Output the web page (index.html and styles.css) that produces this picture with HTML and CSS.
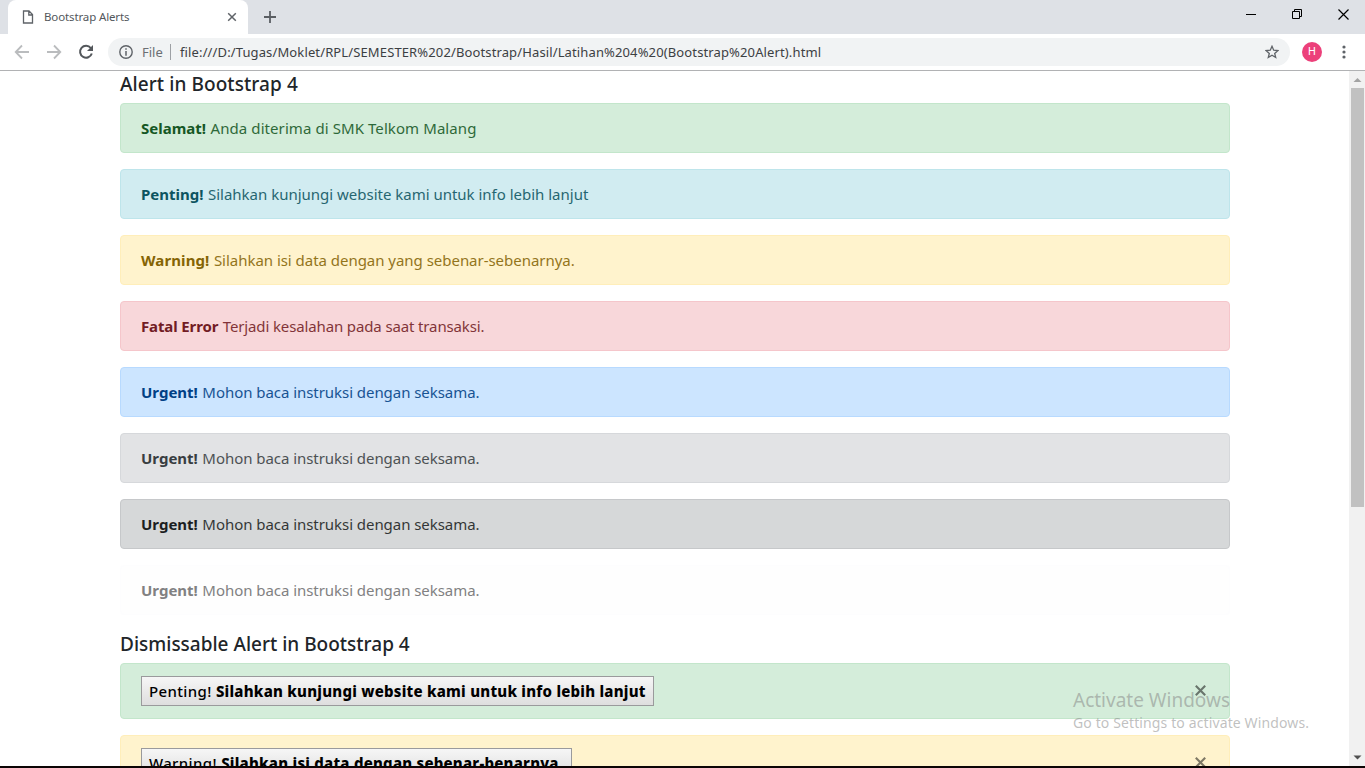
FILE: index.html
```html
<!DOCTYPE html>
<html lang="en">
<head>
<meta charset="utf-8">
<title>Bootstrap Alerts</title>
<link rel="stylesheet" href="styles.css">
</head>
<body>
<div class="window">
  <div class="tabstrip">
    <div class="tab">
      <svg class="doc" width="12" height="14" viewBox="0 0 12 14"><path d="M1.5 1H7l3.5 3.5V13h-9zM6.8 1v4h3.700" fill="none" stroke="#5f6368" stroke-width="1.3"/></svg>
      <span class="tab-title">Bootstrap Alerts</span>
      <svg class="tab-close" width="10" height="10" viewBox="0 0 10 10"><path d="M1.200 1.200l7.600 7.600M8.800 1.200L1.200 8.800" stroke="#5f6368" stroke-width="1.500"/></svg>
    </div>
    <svg class="plus" width="12" height="12" viewBox="0 0 12 12"><path d="M6 0v12M0 6h12" stroke="#5a5e63" stroke-width="1.8"/></svg>
    <div class="controls">
      <svg width="10" height="12" viewBox="0 0 10 12"><path d="M0 6.5h10" stroke="#000"/></svg>
      <svg width="10" height="10" viewBox="0 0 10 10"><path d="M.5 2.5h7v7h-7zM2.5 2.5v-2h7v7h-2" fill="none" stroke="#000"/></svg>
      <svg width="11" height="11" viewBox="0 0 11 11"><path d="M.5.5l10 10M10.5.5l-10 10" stroke="#000" stroke-width="1.2"/></svg>
    </div>
  </div>
  <div class="toolbar">
    <svg class="nav" width="16" height="16" viewBox="0 0 16 16"><path d="M15 8H2M8 1.500L1.700 8 8 14.500" fill="none" stroke="#babcbe" stroke-width="1.8"/></svg>
    <svg class="nav" width="16" height="16" viewBox="0 0 16 16"><path d="M1 8h13M8 1.500L14.300 8 8 14.500" fill="none" stroke="#babcbe" stroke-width="1.8"/></svg>
    <svg class="nav" width="16" height="16" viewBox="0 0 16 16"><path d="M12.800 4A6 6 0 1 0 13.800 9.500" fill="none" stroke="#53575b" stroke-width="2"/><path d="M15 1v6H9z" fill="#53575b"/></svg>
    <div class="omnibox">
      <svg class="info" width="14" height="14" viewBox="0 0 14 14"><circle cx="7" cy="7" r="6.200" fill="none" stroke="#5f6368" stroke-width="1.400"/><path d="M7 3.200v1.600M7 6v4.700" stroke="#5f6368" stroke-width="1.500"/></svg>
      <span class="scheme">File</span>
      <span class="divider"></span>
      <span class="url">file:///D:/Tugas/Moklet/RPL/SEMESTER%202/Bootstrap/Hasil/Latihan%204%20(Bootstrap%20Alert).html</span>
      <svg class="star" width="14" height="14" viewBox="0 0 14 14"><path d="M7 1.300l1.700 3.900 4.200.4-3.200 2.800 1 4.100L7 10.300l-3.700 2.200 1-4.100L1.100 5.600l4.200-.4z" fill="none" stroke="#5f6368" stroke-width="1.300"/></svg>
    </div>
    <div class="avatar">H</div>
    <svg class="menu" width="4" height="14" viewBox="0 0 4 14" fill="#5f6368"><circle cx="2" cy="2" r="1.600"/><circle cx="2" cy="7" r="1.600"/><circle cx="2" cy="12" r="1.600"/></svg>
  </div>
  <div class="viewport">
    <main class="page">
      <div class="container">
        <h5 class="h-one">Alert in Bootstrap 4</h5>
        <div class="alert success"><strong>Selamat!</strong><span>Anda diterima di SMK Telkom Malang</span></div>
        <div class="alert info-alert"><strong>Penting!</strong><span>Silahkan kunjungi website kami untuk info lebih lanjut</span></div>
        <div class="alert warning"><strong>Warning!</strong><span>Silahkan isi data dengan yang sebenar-sebenarnya.</span></div>
        <div class="alert danger"><strong>Fatal Error</strong><span>Terjadi kesalahan pada saat transaksi.</span></div>
        <div class="alert primary"><strong>Urgent!</strong><span>Mohon baca instruksi dengan seksama.</span></div>
        <div class="alert secondary"><strong>Urgent!</strong><span>Mohon baca instruksi dengan seksama.</span></div>
        <div class="alert dark"><strong>Urgent!</strong><span>Mohon baca instruksi dengan seksama.</span></div>
        <div class="alert light"><strong>Urgent!</strong><span>Mohon baca instruksi dengan seksama.</span></div>
        <h5>Dismissable Alert in Bootstrap 4</h5>
        <div class="alert dismiss success"><button class="btn b-one">Penting! <strong>Silahkan kunjungi website kami untuk info lebih lanjut</strong></button><svg class="close" width="11" height="11" viewBox="0 0 11 11"><path d="M.8.8l9.400 9.400M10.200.8L.8 10.200" stroke="#000" stroke-width="2.100"/></svg></div>
        <div class="alert dismiss warning"><button class="btn b-two">Warning! <strong>Silahkan isi data dengan sebenar-benarnya.</strong></button><svg class="close" width="11" height="11" viewBox="0 0 11 11"><path d="M.8.8l9.400 9.400M10.200.8L.8 10.200" stroke="#000" stroke-width="2.100"/></svg></div>
      </div>
    </main>
    <div class="scrollbar">
      <svg width="16" height="17" viewBox="0 0 16 17"><path d="M4.500 11L8.500 7l4 4z" fill="#a3a3a3"/></svg>
      <div class="thumb"></div>
      <svg class="down" width="16" height="17" viewBox="0 0 16 17"><path d="M4.500 6.500h8l-4 4z" fill="#505050"/></svg>
    </div>
    <div class="watermark"><div class="wm-title">Activate Windows</div><div class="wm-sub">Go to Settings to activate Windows.</div></div>
  </div>
  <div class="taskbar"></div>
</div>
</body>
</html>
```

FILE: styles.css
```css
* { box-sizing: border-box; }
body { margin: 0; background: #fff; font-family: "Noto Sans", "Open Sans", sans-serif; overflow: hidden; }
svg { display: block; flex: none; }
.window { width: 1365px; height: 768px; display: flex; flex-direction: column; overflow: hidden; }
.tabstrip { height: 34px; flex: none; background: #dee1e6; display: flex; padding-left: 8px; }
.tab { width: 240px; background: #fff; border-radius: 8px 8px 0 0; display: flex; align-items: center; padding: 0 11px 0 14px; }
.tab-title { flex: 1; margin-left: 10px; padding-bottom: 2px; font-size: 11.5px; letter-spacing: -0.13px; color: #53575b; white-space: nowrap; }
.plus { margin: 11px 0 0 16px; }
.controls { margin-left: auto; display: flex; align-items: center; gap: 36px; padding: 0 16px 6px 0; }
.toolbar { height: 37px; flex: none; border-bottom: 1px solid #b1b2b4; display: flex; align-items: center; padding-left: 14px; }
.nav { margin-right: 16px; }
.omnibox { width: 1182px; height: 28px; margin-left: -2px; border-radius: 14px; background: #f1f3f4; display: flex; align-items: center; padding: 0 11px; white-space: nowrap; font-size: 13px; }
.scheme { color: #6b6f73; margin-left: 9px; width: 28px; }
.divider { width: 1px; height: 16px; background: #9da0a4; }
.url { color: #3c4043; margin-left: 9px; flex: 1; letter-spacing: 0.127px; }
.avatar { width: 20px; height: 20px; margin-left: 12px; border-radius: 50%; background: #ec407a; color: #fff; font: 11px/20px Roboto, sans-serif; text-align: center; }
.menu { margin-left: 20px; }
.viewport { flex: 1; min-height: 0; display: flex; position: relative; overflow: hidden; }
.page { flex: 1; padding-left: 120px; overflow: hidden; }
.container { width: 1110px; }
h5 { margin: 0 0 8px; font-size: 19px; font-weight: 500; line-height: 26px; height: 24px; color: #212529; white-space: nowrap; }
.h-one { letter-spacing: 0.08px; }
.alert { height: 50px; margin-bottom: 16px; padding: 11px 20px; border: 1px solid; border-radius: 4px; font-size: 15px; line-height: 26px; white-space: nowrap; display: flex; gap: 4.5px; }
.alert strong { font-weight: 700; }
.alert > span { opacity: .88; }
.success { color: #155724; background: #d4edda; border-color: #c3e6cb; }
.success span { letter-spacing: 0.08px; }
.info-alert { color: #0c5460; background: #d1ecf1; border-color: #bee5eb; }
.info-alert span { letter-spacing: -0.01px; }
.warning { color: #856404; background: #fff3cd; border-color: #ffeeba; }
.warning strong { letter-spacing: 0.1px; }
.warning span { letter-spacing: -0.03px; }
.danger { color: #721c24; background: #f8d7da; border-color: #f5c6cb; }
.danger strong { letter-spacing: -0.13px; }
.danger span { letter-spacing: -0.13px; }
.primary { color: #004085; background: #cce5ff; border-color: #b8daff; }
.primary span, .secondary span, .dark span, .light span { letter-spacing: -0.05px; }
.secondary { color: #383d41; background: #e2e3e5; border-color: #d6d8db; }
.dark { color: #1b1e21; background: #d6d8d9; border-color: #c6c8ca; }
.light { color: #818182; background: #fefefe; border-color: #fdfdfe; }
.light > span { opacity: 1; }
.dismiss { height: 56px; padding: 12px 23.5px 12px 20px; justify-content: space-between; align-items: flex-start; }
.btn { height: 30px; padding: 0 7px; border: 1px solid #9a9a9c; background: linear-gradient(#f6f6f6, #dedede); color: #000; font: 500 15px/28px "Noto Sans", sans-serif; letter-spacing: 0.36px; text-align: left; white-space: nowrap; }
.btn strong { font-weight: 800; }
.b-one { width: 513px; }
.b-one strong { letter-spacing: 0.23px; }
.b-two { width: 431px; }
.b-two strong { letter-spacing: 0.23px; }
.close { margin-top: 9px; opacity: .5; }
.scrollbar { width: 16px; background: #f1f1f1; display: flex; flex-direction: column; }
.thumb { width: 13px; height: 419px; margin-left: 2px; background: #c1c1c1; }
.down { margin-top: auto; }
.watermark { position: absolute; left: 1073px; top: 616px; color: rgba(130, 130, 130, .5); white-space: nowrap; }
.wm-title { font-size: 19px; line-height: 27px; }
.wm-sub { font-size: 14px; line-height: 18px; letter-spacing: 0.12px; }
.taskbar { height: 2px; flex: none; background: #0c0404; }
```
